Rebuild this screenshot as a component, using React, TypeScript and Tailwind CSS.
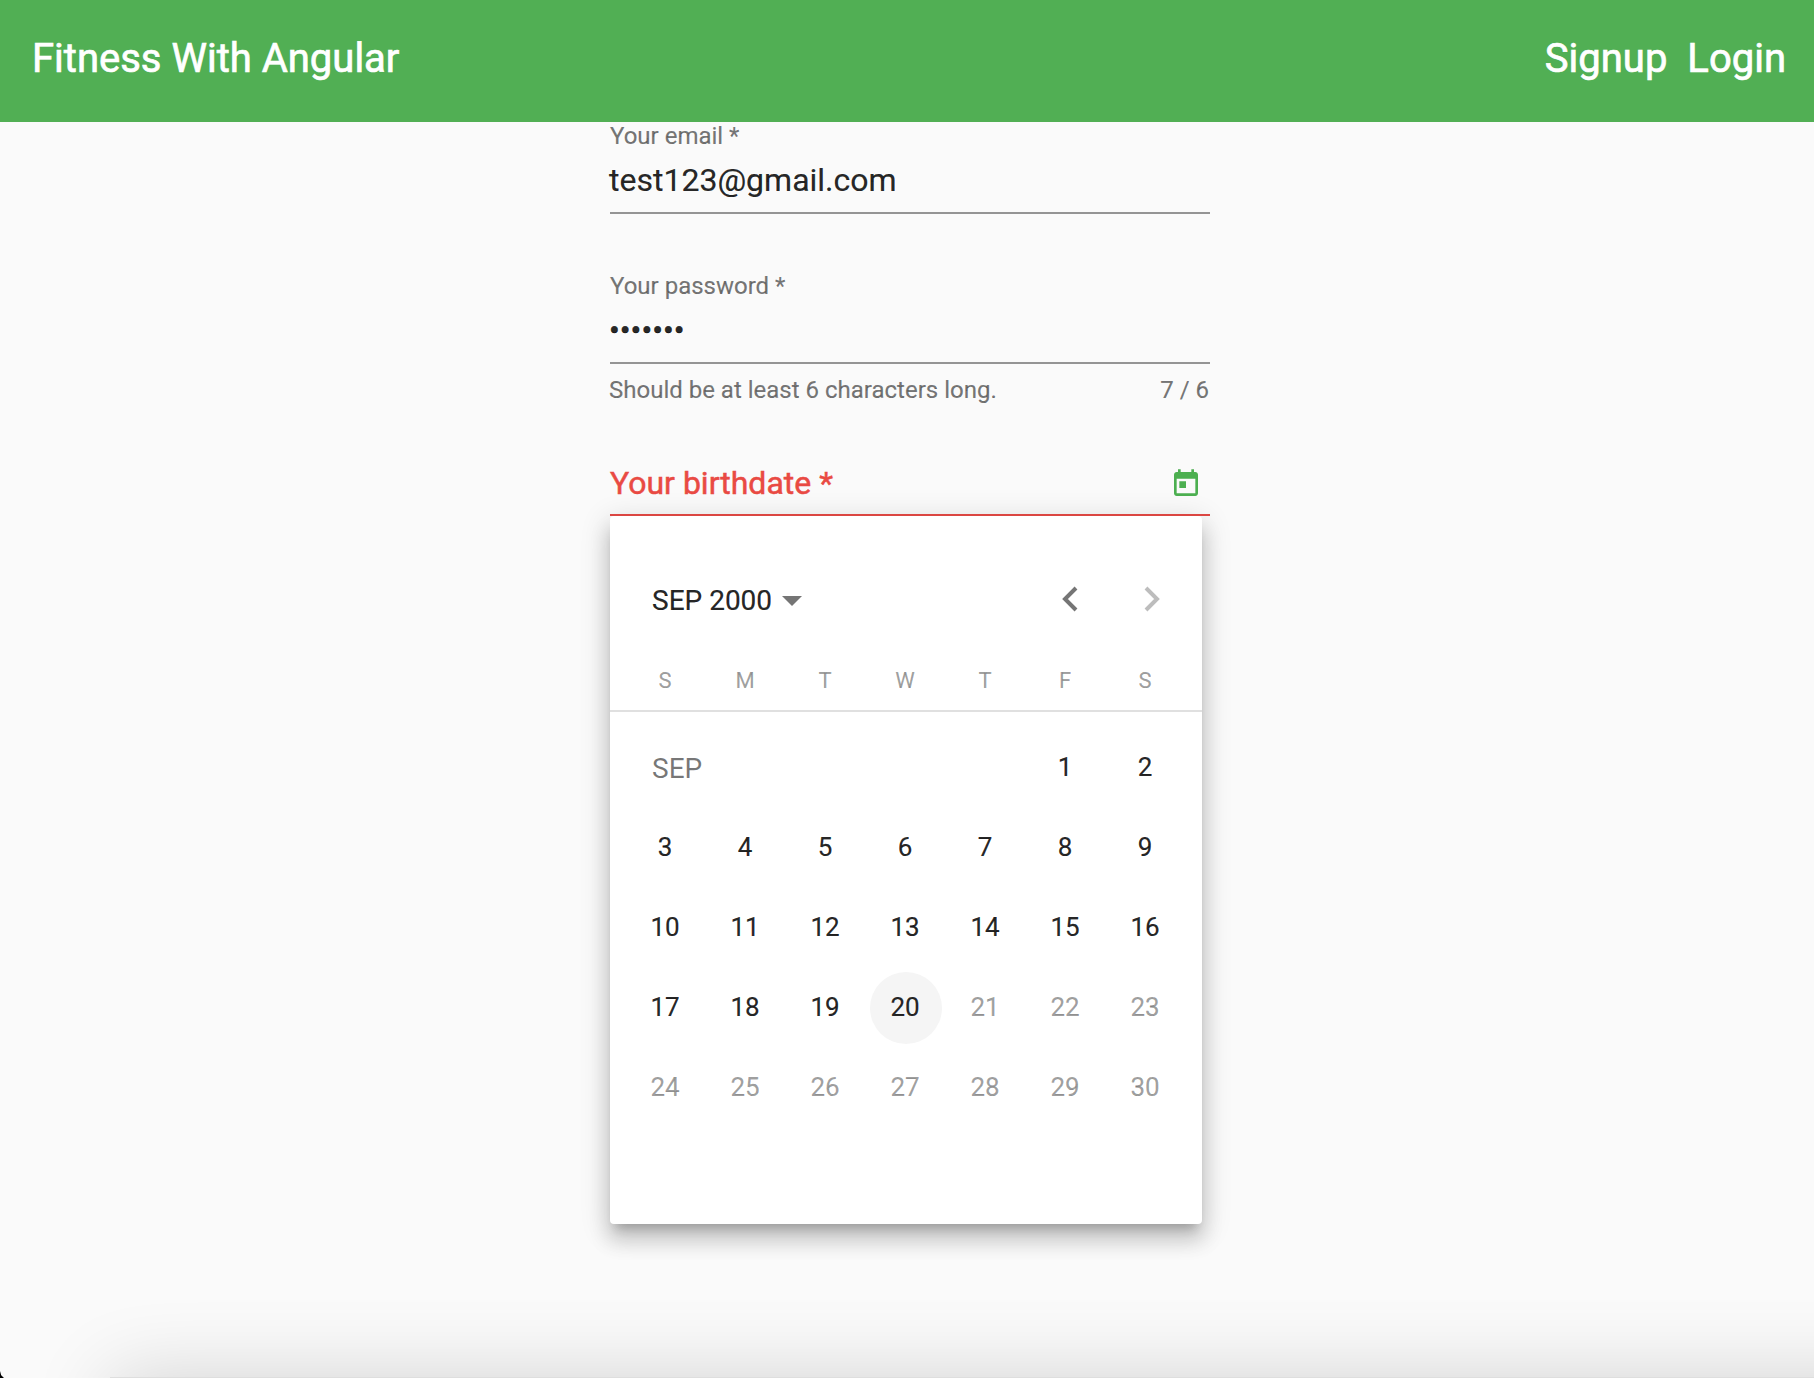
import React from "react";

const WEEKDAYS = ["S", "M", "T", "W", "T", "F", "S"];
const WEEKS = [
  [3, 4, 5, 6, 7, 8, 9],
  [10, 11, 12, 13, 14, 15, 16],
  [17, 18, 19, 20, 21, 22, 23],
  [24, 25, 26, 27, 28, 29, 30],
];
const TODAY = 20;

function Toolbar() {
  return (
    <header className="relative z-10 flex h-[122px] items-start justify-between bg-[#51af54] pt-[37px] pr-[28px] pl-8 text-[40px] leading-[44px] font-normal text-white [-webkit-text-stroke:0.7px_white]">
      <h1>Fitness With Angular</h1>
      <nav className="flex gap-5">
        <a href="#">Signup</a>
        <a href="#">Login</a>
      </nav>
    </header>
  );
}

function Day({ day }: { day: number }) {
  const tone = day > TODAY ? "text-black/38 [-webkit-text-stroke:0.2px]" : "text-black/87 [-webkit-text-stroke:0.2px]";
  return (
    <div className={`flex h-20 w-20 items-center justify-center ${tone}`}>
      <span
        className={`flex h-[72px] w-[72px] items-center justify-center rounded-full pr-0.5 pb-0.5 ${
          day === TODAY ? "bg-[#f5f5f5]" : ""
        }`}
      >
        {day}
      </span>
    </div>
  );
}

function Calendar() {
  return (
    <section className="h-[708px] w-[592px] rounded-[4px] bg-white shadow-[0_10px_10px_-6px_rgba(0,0,0,0.2),0_16px_20px_2px_rgba(0,0,0,0.14),0_6px_28px_4px_rgba(0,0,0,0.12)]">
      <div className="flex h-[154px] items-center justify-between pt-4 pr-[11px] pl-[42px]">
        <button className="flex items-center gap-[10px] text-[28px] leading-8 font-normal text-black/87 [-webkit-text-stroke:0.2px]">
          SEP 2000
          <svg className="h-[10px] w-5" viewBox="0 0 20 10">
            <path d="M0 0h20L10 10z" fill="#757575" />
          </svg>
        </button>
        <div className="flex pb-[5px]">
          <button className="flex h-20 w-20 items-center justify-center">
            <svg className="h-8 w-8" viewBox="0 0 32 32" fill="none" stroke="#757575" strokeWidth="4">
              <path d="M21 5L10 16l11 11" />
            </svg>
          </button>
          <button className="flex h-20 w-20 items-center justify-center">
            <svg className="h-8 w-8" viewBox="0 0 32 32" fill="none" stroke="#bdbdbd" strokeWidth="4">
              <path d="M11 5l11 11-11 11" />
            </svg>
          </button>
        </div>
      </div>
      <div className="flex h-[42px] border-b-2 border-[#e0e0e0] px-[15px] text-[22px] text-black/38 [-webkit-text-stroke:0.2px]">
        {WEEKDAYS.map((d, i) => (
          <span key={i} className="w-20 text-center leading-[22px]">
            {d}
          </span>
        ))}
      </div>
      <div className="px-4 pt-4 text-[26px] leading-8">
        <div className="flex h-20">
          <div className="flex w-[400px] items-center pt-px pl-[26px] text-[28px] text-black/54">SEP</div>
          <Day day={1} />
          <Day day={2} />
        </div>
        {WEEKS.map((week) => (
          <div key={week[0]} className="flex">
            {week.map((d) => (
              <Day key={d} day={d} />
            ))}
          </div>
        ))}
      </div>
    </section>
  );
}

export default function App() {
  return (
    <div className="relative h-[1378px] w-[1814px] overflow-hidden bg-[#fafafa] font-['Roboto',sans-serif] text-black/87">
      <Toolbar />
      <main className="ml-[610px] w-[600px]">
        <div className="h-[92px] border-b-2 border-[#949494]">
          <div className="text-[24px] leading-7 text-black/54 [-webkit-text-stroke:0.2px]">Your email *</div>
          <div className="-ml-px mt-3 text-[32px] leading-9 [-webkit-text-stroke:0.2px]">test123@gmail.com</div>
        </div>
        <div className="mt-[58px] h-[92px] border-b-2 border-[#949494]">
          <div className="text-[24px] leading-7 text-black/54 [-webkit-text-stroke:0.2px]">Your password *</div>
          <div className="-ml-px mt-3 text-[32px] leading-9 [-webkit-text-stroke:0.5px]">•••••••</div>
        </div>
        <div className="mt-3 -ml-px flex justify-between pr-px text-[24px] leading-7 text-black/54 [-webkit-text-stroke:0.2px]">
          <span>Should be at least 6 characters long.</span>
          <span>7 / 6</span>
        </div>
        <div className="relative z-10 mt-[61px] flex h-[51px] items-start justify-between border-b-2 border-[#db4642] pr-2 text-[#e94a43]">
          <span className="text-[32px] leading-9 [-webkit-text-stroke:0.5px]">Your birthdate *</span>
          <svg className="mt-[3px] h-8 w-8" viewBox="0 0 24 24" fill="#4caf50">
            <path d="M19 3h-1V1h-2v2H8V1H6v2H5c-1.11 0-1.99.9-1.99 2L3 19c0 1.1.89 2 2 2h14c1.1 0 2-.9 2-2V5c0-1.1-.9-2-2-2zm0 16H5V8h14v11zM7 10h5v5H7z" />
          </svg>
        </div>
        <Calendar />
      </main>
      {/* Soft shadow rising from the window's lower edge */}
      <div className="absolute top-[1377px] left-[110px] h-40 w-[1900px] bg-[#dedede] shadow-[0_0_80px_0_rgba(0,0,0,0.16)]" />
      <div className="absolute bottom-0 left-0 h-[7px] w-1 bg-black [clip-path:polygon(0_0,30%_60%,100%_100%,0_100%)]" />
    </div>
  );
}
